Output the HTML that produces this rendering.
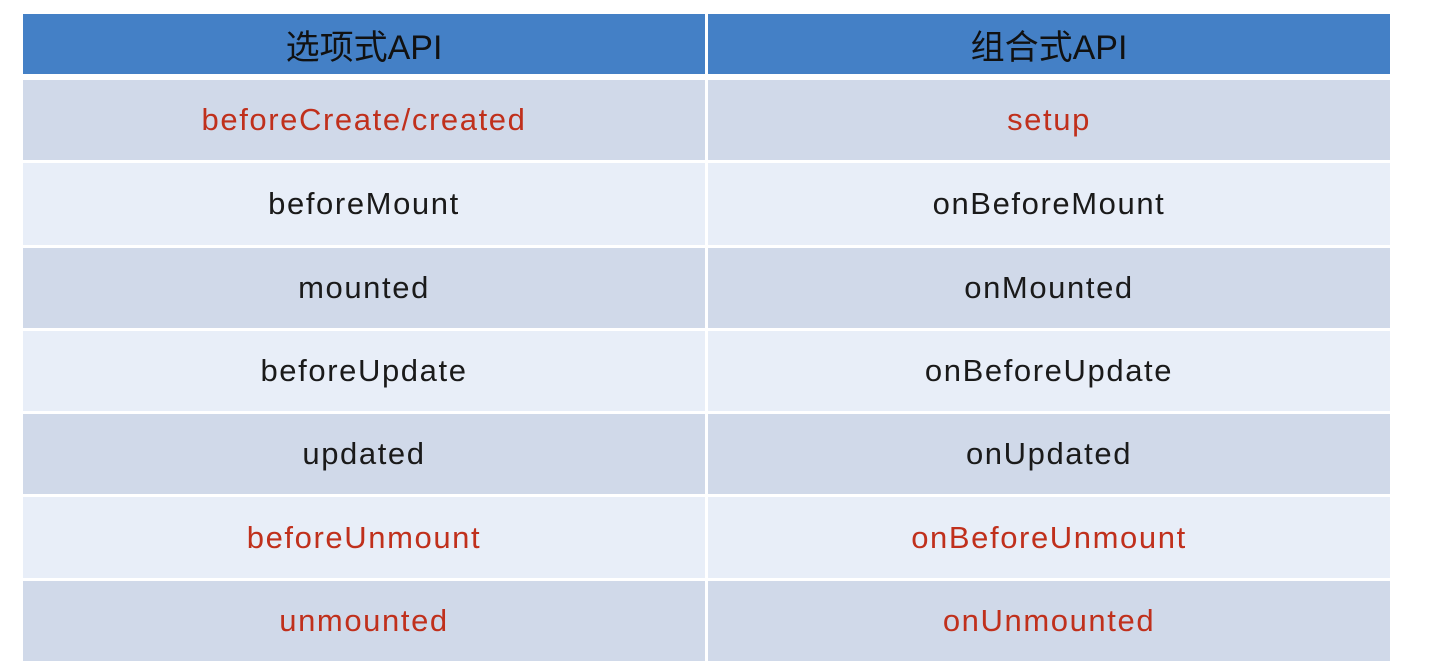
<!DOCTYPE html>
<html><head><meta charset="utf-8"><style>
body{margin:0;width:1441px;height:667px;background:#fff;position:relative;overflow:hidden;font-family:"Liberation Sans","Noto Sans CJK SC",sans-serif}
.c{position:absolute;display:flex;align-items:center;justify-content:center;font-size:31px;letter-spacing:1.6px;color:#1a1a1a}
.h{background:#4480c6;top:14px;height:60px;font-size:34px;letter-spacing:0;color:#111}
.d{background:#d0d9e9}.l{background:#e8eef8}
.r{color:#c0301c}
</style></head><body>
<div class="c h" style="left:23px;width:682px">选项式API</div>
<div class="c h" style="left:708px;width:682px">组合式API</div>

<div class="c d r" style="left:23px;width:682px;top:80px;height:80px">beforeCreate/created</div>
<div class="c d r" style="left:708px;width:682px;top:80px;height:80px">setup</div>

<div class="c l" style="left:23px;width:682px;top:163px;height:82px">beforeMount</div>
<div class="c l" style="left:708px;width:682px;top:163px;height:82px">onBeforeMount</div>

<div class="c d" style="left:23px;width:682px;top:248px;height:80px">mounted</div>
<div class="c d" style="left:708px;width:682px;top:248px;height:80px">onMounted</div>

<div class="c l" style="left:23px;width:682px;top:331px;height:80px">beforeUpdate</div>
<div class="c l" style="left:708px;width:682px;top:331px;height:80px">onBeforeUpdate</div>

<div class="c d" style="left:23px;width:682px;top:414px;height:80px">updated</div>
<div class="c d" style="left:708px;width:682px;top:414px;height:80px">onUpdated</div>

<div class="c l r" style="left:23px;width:682px;top:497px;height:81px">beforeUnmount</div>
<div class="c l r" style="left:708px;width:682px;top:497px;height:81px">onBeforeUnmount</div>

<div class="c d r" style="left:23px;width:682px;top:581px;height:80px">unmounted</div>
<div class="c d r" style="left:708px;width:682px;top:581px;height:80px">onUnmounted</div>
</body></html>
